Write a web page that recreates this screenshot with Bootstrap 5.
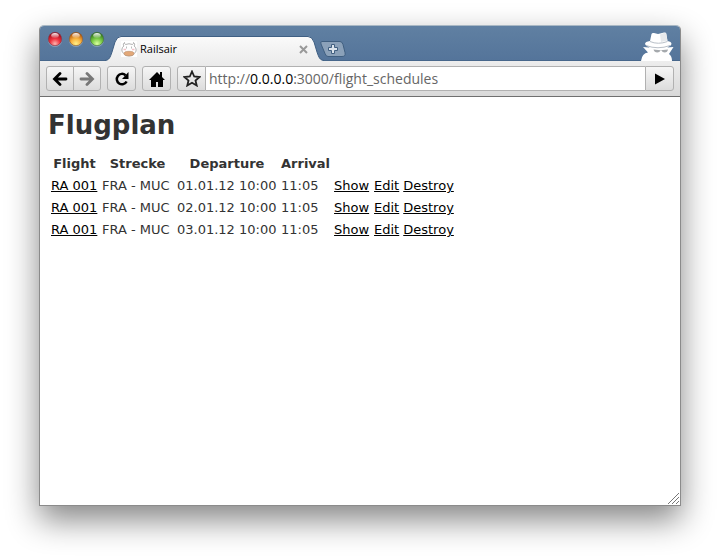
<!DOCTYPE html>
<html lang="de">
<head>
<meta charset="utf-8">
<meta name="viewport" content="width=device-width, initial-scale=1">
<title>Railsair</title>
<link href="https://cdn.jsdelivr.net/npm/bootstrap@5.3.0/dist/css/bootstrap.min.css" rel="stylesheet">
<style>
body { background: #fff; padding: 25px 39px 54px; overflow: hidden; }
.browser { border: 1px solid #8b8b8b; border-top-color: #a9b8c4; border-radius: 5px 5px 0 0; background: #fff;
  box-shadow: 0 14px 32px rgba(0,0,0,.48); }
.strip { height: 35px; background: linear-gradient(#6080a2, #54749a); border-radius: 4px 4px 0 0; box-shadow: inset 0 -1px #47678b; font: 11px/14px "Lucida Grande", "Open Sans", sans-serif; }
.lights { padding: 5px 0 0 7px; gap: 5px; width: 65px; }
.lights button, .tab-close, .new-tab { border: 0; padding: 0; background: none; line-height: 0; }
.lights svg { display: block; }
.new-tab { margin-left: -4px; }
.tab-body { width: 187px; height: 25px; background: linear-gradient(#fafafa, #ededed); border-top: 1px solid #3f5f83; color: #000; gap: 3px; }
.tools { padding: 5px 6px; gap: 6px; background: linear-gradient(#ededed, #d9d9d9); border-bottom: 1px solid #6f6f6f; }
.tool { height: 25px; width: 29px; padding: 0; border: 1px solid #b1b1b1; border-radius: 3px; background: linear-gradient(#f6f6f6, #dcdcdc); line-height: 0; }
.tool svg { display: block; margin: auto; }
.pair .tool { width: 28px; }
.pair .tool + .tool { margin-left: -1px; }
.address { height: 25px; min-width: 0; border: solid #b1b1b1; border-width: 1px 0; background: #fff; padding: 0 3px; font: 14px/23px "Lucida Grande", "Open Sans", sans-serif; color: #666; white-space: nowrap; }
.address b { font-weight: 400; color: #000; }
.page-area { font: 13px/18px Verdana, "DejaVu Sans", sans-serif; color: #333; padding: 8px; }
.page-area h1 { font: bold 26px/32px Verdana, "DejaVu Sans", sans-serif; margin: 4px 0 11px; }
.flights { border-collapse: separate; border-spacing: 2px; }
.flights th { text-align: center; }
.flights th, .flights td { padding: 1px; white-space: nowrap; }
.flights a { color: #000; }
.col-flight { width: 49px; }
.col-route { width: 73px; }
.col-departure { width: 102px; }
.col-show { width: 38px; }
.col-edit { width: 27px; }
.grip { right: 1px; bottom: 1px; }
</style>
<script src="https://cdn.jsdelivr.net/npm/bootstrap@5.3.0/dist/js/bootstrap.bundle.min.js"></script>
</head>
<body class="min-vh-100 d-flex">
<div class="browser flex-grow-1 d-flex flex-column position-relative">
  <header>
    <div class="strip d-flex align-items-end">
      <div class="lights d-flex align-self-start">
        <button type="button" aria-label="Close"><svg width="16" height="16" viewBox="0 0 16 16"><defs>
          <radialGradient id="red" cx=".5" cy=".85" r=".75"><stop offset="0" stop-color="#ffb4ae"/><stop offset=".5" stop-color="#ef3340"/><stop offset="1" stop-color="#a50d1c"/></radialGradient>
          <radialGradient id="amber" cx=".5" cy=".85" r=".75"><stop offset="0" stop-color="#fff088"/><stop offset=".5" stop-color="#f9b440"/><stop offset="1" stop-color="#b85a0b"/></radialGradient>
          <radialGradient id="green" cx=".5" cy=".85" r=".75"><stop offset="0" stop-color="#dcffa0"/><stop offset=".5" stop-color="#7ccc48"/><stop offset="1" stop-color="#347d1c"/></radialGradient>
          <linearGradient id="shine" x2="0" y2="1"><stop stop-color="#fff" stop-opacity=".95"/><stop offset="1" stop-color="#fff" stop-opacity=".1"/></linearGradient></defs>
          <circle cx="8" cy="9" r="7" fill="#a9bdd0" opacity=".6"/><circle cx="8" cy="8" r="6.7" fill="url(#red)" stroke="#7b3040" stroke-width=".6"/><ellipse cx="8" cy="4.5" rx="3.8" ry="2.5" fill="url(#shine)"/></svg></button>
        <button type="button" aria-label="Minimize"><svg width="16" height="16" viewBox="0 0 16 16"><circle cx="8" cy="9" r="7" fill="#a9bdd0" opacity=".6"/><circle cx="8" cy="8" r="6.7" fill="url(#amber)" stroke="#80552f" stroke-width=".6"/><ellipse cx="8" cy="4.5" rx="3.8" ry="2.5" fill="url(#shine)"/></svg></button>
        <button type="button" aria-label="Zoom"><svg width="16" height="16" viewBox="0 0 16 16"><circle cx="8" cy="9" r="7" fill="#a9bdd0" opacity=".6"/><circle cx="8" cy="8" r="6.7" fill="url(#green)" stroke="#3c6540" stroke-width=".6"/><ellipse cx="8" cy="4.5" rx="3.8" ry="2.5" fill="url(#shine)"/></svg></button>
      </div>
      <svg width="16" height="25" viewBox="0 0 16 25"><defs><linearGradient id="tabfill" x2="0" y2="1"><stop stop-color="#fafafa"/><stop offset="1" stop-color="#ededed"/></linearGradient></defs><path d="M0 25C4 24 5 22 7 16L10 6Q12 .5 16 .5V25z" fill="url(#tabfill)"/><path d="M0 24.5C4 24 5 22 7 16L10 6Q12 .5 16 .5" fill="none" stroke="#3f5f83"/></svg>
      <div class="tab-body d-flex align-items-center">
        <svg width="16" height="16" viewBox="0 0 16 16"><path d="M0 0h16v16H0z" fill="#fff"/><path d="M4.500 3.500Q3.500 3 3.500 1.500 1.500 3 2.800 5 .8 6.500.8 9q0 2 2 3.500Q3.500 15 8 15t5.200-2.500q2-1.500 2-3.500 0-2.500-2-4 1.300-2-.7-3.500 0 1.500-1 2Q8 2 4.500 3.500z" fill="#fff" stroke="#a8a8a8" stroke-width=".9"/><ellipse cx="8" cy="12.600" rx="5" ry="2.300" fill="#e3a878" stroke="#b98d6c" stroke-width=".6"/><path d="M5.500 5.500v2M10.500 5.500v2" stroke="#aaa" stroke-width=".8"/><path d="M2.500 8.500h2.500M11 8.500h2.500" stroke="#f3c3cb" stroke-width="1.500"/></svg>
        <span class="flex-grow-1">Railsair</span>
        <button type="button" class="tab-close" aria-label="Close tab"><svg width="9" height="9" viewBox="0 0 9 9"><path d="M1 1l7 7M8 1l-7 7" stroke="#999" stroke-width="2"/></svg></button>
      </div>
      <svg width="16" height="25" viewBox="0 0 16 25"><path d="M16 25C12 24 11 22 9 16L6 6Q4 .5 0 .5V25z" fill="url(#tabfill)"/><path d="M16 24.5C12 24 11 22 9 16L6 6Q4 .5 0 .5" fill="none" stroke="#3f5f83"/></svg>
      <button type="button" class="new-tab align-self-end mb-1" aria-label="New tab"><svg width="26" height="16" viewBox="0 0 26 16"><path d="M2 .5h18q2 0 3 3l2 8q1 4-3 4H8q-2 0-3-3L1 3Q0 .5 2 .5z" fill="#8ba1b9" stroke="#405f80"/><path d="M11.500 3.500h3v3h3v3h-3v3h-3v-3h-3v-3h3z" fill="#dce4ec" stroke="#405f80"/></svg></button>
      <svg class="ms-auto me-1" width="36" height="30" viewBox="0 0 36 30"><path d="M1 30Q2 22 8 21.500L3 16l6 .5h18l6.500-.5L29 23q3 2 3 7z" fill="#fff"/><path d="M9 15h19l-1 6-4 4h-9l-4-4z" fill="#fff"/><path d="M5 13q0-2.500 5-3L11.500 3q.5-1.500 2.500-1l4 1 6-1.500q2-.5 2.300 1L27.500 10q4 .5 4 3 0 3.500-13 3.500T5 13z" fill="#fff"/><path d="M20 3.500l4-1.500q2-.5 2.200 1l1.200 6.500-6.400 1.500z" fill="#e6e9ec"/><path d="M10 10.500q8 3.500 17.500 0M6 14.500q12 4.500 24 0" fill="none" stroke="#b9c0c8"/><path d="M13.500 18.500l7 .7 7.500-.7q-.5 3-3.300 3-2.400 0-3.200-2h-1q-.8 2-3.200 2-3 0-3.800-3z" fill="#a5a9ad"/></svg>
    </div>
    <div class="tools d-flex">
      <div class="pair d-flex">
        <button type="button" class="tool rounded-end-0" aria-label="Back"><svg width="16" height="14" viewBox="0 0 16 14"><path d="M14 7H3M8 1.500L2.500 7 8 12.500" fill="none" stroke="#000" stroke-width="2.800" stroke-linecap="round"/></svg></button>
        <button type="button" class="tool rounded-start-0" aria-label="Forward"><svg width="16" height="14" viewBox="0 0 16 14"><path d="M2 7h11M8 1.500L13.500 7 8 12.500" fill="none" stroke="#777" stroke-width="2.800" stroke-linecap="round"/></svg></button>
      </div>
      <button type="button" class="tool" aria-label="Reload"><svg width="16" height="16" viewBox="0 0 16 16"><path d="M11.500 4.200A5.200 5.200 0 1 0 12.600 10.500" fill="none" stroke="#000" stroke-width="2.500"/><path d="M14.500 1v7H8z"/></svg></button>
      <button type="button" class="tool" aria-label="Home"><svg width="16" height="16" viewBox="0 0 16 16"><path d="M8 1l3 3V1h2v5l3 3h-2v7H9v-5H7v5H2V9H0z"/></svg></button>
      <div class="d-flex flex-grow-1">
        <button type="button" class="tool rounded-end-0" aria-label="Bookmark"><svg width="18" height="17" viewBox="0 0 18 17"><path d="M9 1.500l2.200 5 5.300.5-4 3.500 1.200 5L9 12.800l-4.700 2.700 1.200-5-4-3.500 5.300-.5z" fill="none" stroke="#222" stroke-width="1.800"/></svg></button>
        <div class="address flex-grow-1" role="textbox" aria-label="Address" contenteditable="true" spellcheck="false">http://<b>0.0.0.0</b>:3000/flight_schedules</div>
        <button type="button" class="tool rounded-start-0" aria-label="Go"><svg width="10" height="12" viewBox="0 0 10 12"><path d="M0 .5v11L10 6z"/></svg></button>
      </div>
    </div>
  </header>
  <main class="page-area flex-grow-1">
    <h1>Flugplan</h1>
    <table class="flights">
      <colgroup><col class="col-flight"><col class="col-route"><col class="col-departure"><col><col class="col-show"><col class="col-edit"><col></colgroup>
      <thead><tr><th scope="col">Flight</th><th scope="col">Strecke</th><th scope="col">Departure</th><th scope="col">Arrival</th><td></td><td></td><td></td></tr></thead>
      <tbody>
        <tr><td><a href="#">RA 001</a></td><td>FRA - MUC</td><td>01.01.12 10:00</td><td>11:05</td><td><a href="#">Show</a></td><td><a href="#">Edit</a></td><td><a href="#">Destroy</a></td></tr>
        <tr><td><a href="#">RA 001</a></td><td>FRA - MUC</td><td>02.01.12 10:00</td><td>11:05</td><td><a href="#">Show</a></td><td><a href="#">Edit</a></td><td><a href="#">Destroy</a></td></tr>
        <tr><td><a href="#">RA 001</a></td><td>FRA - MUC</td><td>03.01.12 10:00</td><td>11:05</td><td><a href="#">Show</a></td><td><a href="#">Edit</a></td><td><a href="#">Destroy</a></td></tr>
      </tbody>
    </table>
  </main>
  <svg class="grip position-absolute" width="11" height="11" viewBox="0 0 11 11"><path d="M0 11L11 0M4 11l7-7M8 11l3-3" stroke="#777"/></svg>
</div>
</body>
</html>
